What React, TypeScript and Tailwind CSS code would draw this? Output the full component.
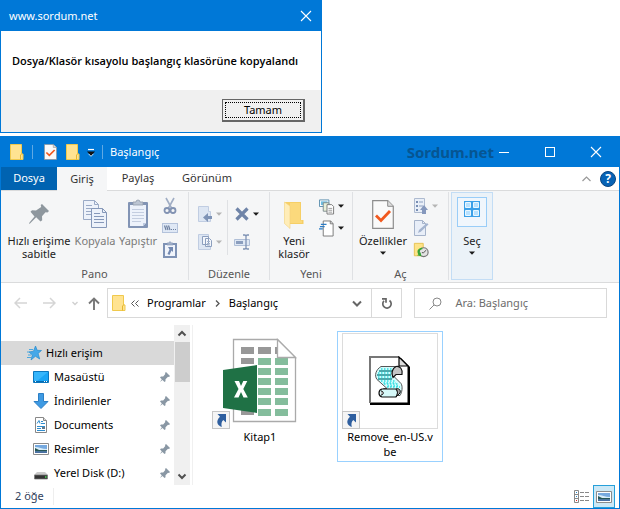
import React from 'react';

const CloseIcon = () => (
  <svg width="12" height="12" viewBox="0 0 12 12" fill="none" stroke="white" strokeWidth="1.1"><path d="M1 1l10 10M11 1L1 11" /></svg>
);

const SmallFolder = () => (
  <svg width="16" height="18" viewBox="0 0 16 18">
    <path d="M1.5 1.5h11v9.5h1.500v5.500H1.500z" fill="#ffe391" stroke="#f0c94c" />
    <path d="M11.500 16.500V12l1.500-1.500" fill="none" stroke="#e5b72f" />
  </svg>
);

const CheckSheet = ({ w = 14, h = 18 }: { w?: number; h?: number }) => (
  <svg width={w} height={h} viewBox="0 0 22 29" preserveAspectRatio="none">
    <path d="M.7.700h15l5.600 5.600v22H.700z" fill="#fafafa" stroke="#8d8d8d" strokeWidth="1.200" />
    <path d="M15.700.700v5.600h5.600" fill="#ddd" stroke="#8d8d8d" />
    <path d="M4 15.500l5 5L18 11" fill="none" stroke="#f1591f" strokeWidth="2.800" />
  </svg>
);

const Caret = ({ color = '#1a1a1a' }: { color?: string }) => (
  <svg width="6" height="4" viewBox="0 0 6 4"><path d="M0 .5h6L3 3.800z" fill={color} /></svg>
);

const BigPin = () => (
  <svg width="24" height="32" viewBox="0 0 24 32">
    <path d="M15 6l7 7-1.500 1.500-2-.3-3.500 4 .2 4-1.700 1.400-4.300-4.300L3 25.500l-1 .5.500-1.500 5-6L3.500 13.800 5 12.300l4 .2L14.200 9l-.5-2z" fill="#8e979e" />
  </svg>
);

const CopyBig = () => (
  <svg width="26" height="32" viewBox="0 0 26 32" stroke="#9aaac6">
    <path d="M1.500 2.500h11l4 4v15h-15z" fill="#edf2fa" />
    <path d="M12.500 2.500v4h4M4 7.500h6M4 10.500h9M4 13.500h9M4 16.500h9" fill="none" />
    <path d="M9.500 10.500h11l4 4v15h-15z" fill="#edf2fa" stroke="#8698b9" />
    <path d="M20.500 10.500v4h4M12 15.500h6M12 18.500h10M12 21.500h10M12 24.500h10" fill="none" stroke="#8698b9" />
  </svg>
);

const PasteBig = () => (
  <svg width="22" height="32" viewBox="0 0 22 32">
    <rect x="1" y="4" width="20" height="26" rx="1" fill="#8294b5" />
    <path d="M3 7h16v18l-3 3H3z" fill="#edf2fb" />
    <path d="M5 11.500h12M5 14.500h12M5 17.500h12M5 20.500h12M5 23.500h9" stroke="#c3cde0" />
    <path d="M6 7V4h3a2 2 0 014 0h3v3z" fill="#bcc5d3" stroke="#8f99a9" strokeWidth=".8" />
    <path d="M19 25h-3v3z" fill="#bdc9df" />
  </svg>
);

const Scissors = () => (
  <svg width="14" height="18" viewBox="0 0 14 18" fill="none" stroke="#8192b2">
    <path d="M3 1l5.500 10M11 1L5.500 11" strokeWidth="1.600" stroke="#a0adc4" />
    <circle cx="4" cy="13.500" r="2.500" strokeWidth="1.800" /><circle cx="10" cy="13.500" r="2.500" strokeWidth="1.800" />
  </svg>
);
const PathIcon = () => (
  <svg width="16" height="10" viewBox="0 0 16 10">
    <rect x=".5" y=".5" width="15" height="9" fill="#dfe8f5" stroke="#b3c2db" />
    <path d="M2.500 2.500L4 7M4.500 2.500L6 7M6.500 2.500L8 7M9 6.500h1M11 6.500h1M13 6.500h1" stroke="#6c7f9f" strokeWidth="1.200" />
  </svg>
);
const PasteLink = () => (
  <svg width="14" height="18" viewBox="0 0 14 18">
    <path d="M0 2h14v15H0z" fill="#7e92b5" /><path d="M2 4h10v11H2z" fill="#f0f4fb" /><path d="M4 4V2h1.500L7 .5 8.500 2H10v2z" fill="#a2b0c8" stroke="#7e92b5" strokeWidth=".6" />
    <path d="M5 6h5v5L8.500 9.500 6.500 14 4.500 13l2-4.500z" fill="#7288b0" />
  </svg>
);

const MoveTo = () => (
  <svg width="15" height="18" viewBox="0 0 15 18">
    <path d="M.500 1.500h10v5h2v10H.500z" fill="#dde6f3" stroke="#c0cde2" />
    <path d="M5 12.500l5-4.500v3h4v3h-4v3z" fill="#7e93b6" />
  </svg>
);
const CopyTo = () => (
  <svg width="15" height="18" viewBox="0 0 15 18">
    <path d="M.500 1.500h10v5h2v10H.500z" fill="#dde6f3" stroke="#c0cde2" />
    <path d="M4.500 3.500h6v8h-6zM7.500 5.500h4l2 2v6h-6z" fill="#f3f6fb" stroke="#8c9fbe" />
    <path d="M9 8.500h3M9 10.500h3M9 12h3" stroke="#a5b4cd" />
  </svg>
);
const DeleteX = () => (
  <svg width="16" height="16" viewBox="0 0 16 16"><path d="M2.500 2.500l11 11M13.500 2.500l-11 11" stroke="#6f84a8" strokeWidth="3.200" /></svg>
);
const Rename = () => (
  <svg width="16" height="16" viewBox="0 0 16 16">
    <path d="M.500 5.500h15v6H.500z" fill="#dfe8f4" stroke="#b0bfd7" /><path d="M2 7h7v3H2z" fill="#8b9ebe" />
    <path d="M9 1h2l1 1 1-1h2M9 15h2l1-1 1 1h2M12 2v12" fill="none" stroke="#7e92b4" strokeWidth="1.300" />
  </svg>
);
const NewFolder = () => (
  <svg width="22" height="32" viewBox="0 0 22 32">
    <path d="M2 4h16v18h2.500v4H6z" fill="#f6cf66" /><path d="M7 5h10v17.500h2V25H7z" fill="#fbd97c" />
    <path d="M1.500 4l5.500 4v22.500l-5.500-5z" fill="#ffedb8" stroke="#f3d27a" strokeWidth=".6" />
  </svg>
);
const NewItem = () => (
  <svg width="17" height="17" viewBox="0 0 17 17">
    <path d="M.500 1.500h10v7H.500z" fill="#fff" stroke="#5a8eae" /><path d="M2 3h7v4H2z" fill="#6dbde2" />
    <path d="M4.500 4.500h6v9h-6z" fill="#e8efd8" stroke="#7c8b8e" />
    <path d="M8.500 6.500h5l2 2v8h-7z" fill="#fff" stroke="#777" /><path d="M10 10.500h4M10 12.500h4M10 14.500h4" stroke="#999" />
  </svg>
);
const EasyAccess = () => (
  <svg width="17" height="17" viewBox="0 0 17 17">
    <path d="M4.500.500h8l2.500 3v13H4.500z" fill="#fff" stroke="#777" /><path d="M12 .500v3h3" fill="none" stroke="#777" />
    <path d="M2 4h6M1 6.500h5M0 9h4" stroke="#2d7cc5" strokeWidth="1.300" />
  </svg>
);
const OpenList = () => (
  <svg width="16" height="18" viewBox="0 0 16 18">
    <path d="M1.500 1.500h10v14h-10z" fill="#e9eff8" stroke="#aebbd0" /><path d="M3 4h2v2H3zM3 8h2v2H3zM3 12h2v2H3z" fill="#788eb4" />
    <path d="M6 5h4M6 9h4" stroke="#8da0c0" /><path d="M11 8l4 5h-2v4H9v-4H7z" fill="#8598bd" />
  </svg>
);
const EditSheet = () => (
  <svg width="16" height="18" viewBox="0 0 16 18">
    <path d="M1.500 1.500h8l3 3v12h-11z" fill="#e8eef8" stroke="#a5b3ca" /><path d="M9.500 1.500v3h3" fill="none" stroke="#a5b3ca" />
    <path d="M5 14l1-3 8-7 1.500 1.500-7.500 7z" fill="#a4b4cf" />
  </svg>
);
const History = () => (
  <svg width="18" height="18" viewBox="0 0 18 18">
    <path d="M1.500 1.500h10v14h-10z" fill="#fde388" stroke="#e6c04c" />
    <circle cx="12" cy="11.500" r="5" fill="#e4e4e4" stroke="#777" strokeWidth="1.300" /><path d="M12 12l3-3M12 12h-2" stroke="#444" />
    <path d="M10 6.500C5 7 4 11 6 14l-1.500 1 5 1-1-4.500-1 1C7 10 8 8.500 11 8z" fill="#35a536" />
  </svg>
);

const ShortcutArrow = () => (
  <svg className="block" width="18" height="18" viewBox="0 0 18 18">
    <rect x=".5" y=".5" width="17" height="17" fill="#f5f5f5" stroke="#c6c6c6" />
    <path d="M5.500 3H14v8.500l-2.700-2.500C9.500 10.500 9 13 9.800 16 5 14.500 3.500 10 8 5.800z" fill="#2f5f9f" />
  </svg>
);
const ExcelSheet = () => (
  <svg width="96" height="96" viewBox="-1 0 96 96">
    <path d="M20.500 6.500h44l18 18v64h-62z" fill="#fff" stroke="#aaa" strokeWidth="1.300" />
    <path fill="#989898" d="M28 14h13v7H28zM45 14h13v7H45zM62 14h3v7h-3zM28 25h13v6H28zM28 76h13v6H28z" />
    {[25, 35, 45, 55, 65, 76].map((y) => <path key={y} d={`M45 ${y}h13v7H45zM62 ${y}h13v7H62z`} fill="#84bd9c" />)}
    <path d="M64.500 6.500v18h18z" fill="#fff" stroke="#aaa" strokeWidth="1.300" />
    <path d="M10 37l34-5v48l-34-5z" fill="#1f7145" />
    <path d="M21.500 48H26l2 5 2.300-5h4l-4 8 4.500 8.500H30.500L28 59l-2.500 5.500H21l4.500-8.500z" fill="#fff" />
  </svg>
);
const ScriptSheet = () => (
  <svg width="42" height="50" viewBox="0 0 42 50">
    <path d="M3 2h29l9 9v38H1V2z" fill="#000" /><path d="M1 1h29l8.500 8.500V46.500H1z" fill="#fff" /><path d="M1 47V1h29" fill="none" stroke="#777" strokeWidth="2" />
    <path d="M30 1v9h9z" fill="#ddd" stroke="#000" strokeWidth="1.200" />
    <path d="M12 10.500h16c-4 2-6 6-4 9l8 8c2 3 1 9-1 12H16c-5-1-4-6-1-7h3l-10-9c-3-4-1-10 4-13z" fill="#d4fcfc" stroke="#555" strokeWidth="1" />
    <path d="M10 15h13M8 19h14M9 23h14" stroke="#1d8d93" strokeWidth="1.300" />
    <path d="M12 13h12M9 17h13M9 21h14M12 25h14M15 28h15M18 31h13" stroke="#30dce0" strokeWidth="1.600" strokeDasharray="1.500 1.500" />
    <path d="M13 27h14M17 30h13" stroke="#30dce0" strokeWidth="1.400" strokeDasharray="1.500 1.500" strokeDashoffset="1.500" />
    <path d="M27 10.500c4-1 7 3 6 8h-6l-3 3c-2-4-1-9 3-11z" fill="#c4c4c4" stroke="#111" strokeWidth="1.200" />
    <path d="M13 33h14c2 2 2 5 0 8H13c-4-1-4-7 0-8z" fill="#d6f8f8" stroke="#111" strokeWidth="1.200" />
    <path d="M27 33c3-1 5 1 4 4l-4 4c2-3 2-6 0-8z" fill="#aaa" stroke="#111" />
    <path d="M12 35c3 0 3 4 0 4" fill="#c4c4c4" stroke="#111" />
  </svg>
);

const Star = () => (
  <svg width="16" height="16" viewBox="0 0 16 16">
    <path d="M9.500 1l1.700 4.300 4.300.2-3.400 2.900 1.600 5.600-4.300-2.700L5 15l1.300-5L3 7l4.500-.8z" fill="#46a8e8" stroke="#258ccf" strokeWidth=".7" />
    <path d="M3 4.500h4M1 7h3M2 10h3M1 12.500h4" stroke="#4ba7de" />
  </svg>
);
const Desktop = () => (
  <svg width="16" height="16" viewBox="0 0 16 16"><path d="M.500 2.500h15v11H.500z" fill="#19a4f5" stroke="#0b76bd" /><path d="M15 3L4 12H1V3z" fill="#35b5fb" /><path d="M1 12.500h14" stroke="#056ab0" /><path d="M2 12.500h1M11 12.500h1M13 12.500h1" stroke="#fff" /></svg>
);
const Download = () => (
  <svg width="16" height="16" viewBox="0 0 16 16"><path d="M5.500.500h5v8h4.500L8 15.500 1 8.500h4.500z" fill="#3e9ae3" stroke="#2c7fc5" /></svg>
);
const Documents = () => (
  <svg width="16" height="16" viewBox="0 0 16 16">
    <path d="M2.500.500h8l3 3v12h-11z" fill="#fff" stroke="#888" /><path d="M10.500.500v3h3" fill="#ddd" stroke="#888" />
    <path d="M4 6.500l2-3 1 3M8 4.500h2M8 6.500h4M4 9.500h8M4 11.500h4M4 13.500h8" stroke="#2f8dce" fill="none" /><path d="M9 10h3v2H9z" fill="#66798a" />
  </svg>
);
const Picture = () => (
  <svg width="16" height="16" viewBox="0 0 16 16">
    <path d="M.500 2.500h15v11H.500z" fill="#fff" stroke="#8b8b8b" /><path d="M2 4h12v8H2z" fill="#76a9df" />
    <path d="M2 6c4 0 7 2 12 2v2H2z" fill="#d8edf8" /><path d="M2 7l4 2h8v1.500H2z" fill="#275655" /><path d="M2 10.500h12V12H2z" fill="#496fa3" />
  </svg>
);
const Disk = () => (
  <svg width="16" height="16" viewBox="0 0 16 16"><path d="M4 7h8l3 3H1z" fill="#c9c9c9" /><path d="M1.500 10h13v4h-13z" fill="#343434" stroke="#777" strokeWidth=".7" /><path d="M12 12h1.500" stroke="#48da54" strokeWidth="1.500" /></svg>
);
const TinyPin = () => (
  <svg width="12" height="12" viewBox="0 0 12 12"><path d="M7 1l4 4-1 1-1-.2-2.500 2.500v2L5.500 11 3.500 9 1 11l1.800-2.700L1 6.500 2 5.500h2.200L6.300 3 6 2z" fill="#8997a4" /></svg>
);

const text = 'text-[11px] leading-[13px]';

type BigProps = { icon: React.ReactNode; lines: string[]; width: string; muted?: boolean; caret?: boolean };
function BigButton({ icon, lines, width, muted, caret }: BigProps) {
  return (
    <button className={`${width} ${text} flex shrink-0 flex-col items-center pt-[6px] whitespace-nowrap ${muted ? 'text-[#7a7a7a]' : 'text-[#222]'}`}>
      <span className="mb-1 flex h-8 items-center justify-center">{icon}</span>
      {lines.map((l) => <span key={l}>{l}</span>)}
      {caret && <span className="flex h-[11px] items-center"><Caret /></span>}
    </button>
  );
}

function SmallButton({ icon, caret, label, tall }: { icon: React.ReactNode; caret?: string; label: string; tall?: boolean }) {
  return (
    <button aria-label={label} className={`flex items-center gap-[3px] ${tall ? 'h-7' : 'h-[22px]'}`}>
      <span className="flex w-4 justify-center">{icon}</span>
      {caret && <Caret color={caret} />}
    </button>
  );
}

function Group({ name, width, children }: { name: string; width: string; children: React.ReactNode }) {
  return (
    <section aria-label={name} className={`${width} flex shrink-0 flex-col border-r border-[#dfe1e4]`}>
      <div className="flex h-[74px]">{children}</div>
      <div className={`${text} pt-px text-center text-[#555]`}>{name}</div>
    </section>
  );
}

const navItems = [
  { name: 'Masaüstü', icon: <Desktop /> },
  { name: 'İndirilenler', icon: <Download /> },
  { name: 'Documents', icon: <Documents /> },
  { name: 'Resimler', icon: <Picture /> },
  { name: 'Yerel Disk (D:)', icon: <Disk /> },
];

function MessageDialog() {
  return (
    <div role="dialog" aria-label="www.sordum.net" className="w-[322px] max-w-full border border-[#0078d7] bg-white">
      <header className="flex h-[30px] items-center justify-between bg-[#0078d7] pr-[9px] pl-2 text-[11px] text-white">
        <span>www.sordum.net</span>
        <button aria-label="Kapat"><CloseIcon /></button>
      </header>
      <p className="h-[59px] pt-[22px] pl-[11px] font-['Open_Sans','Noto_Sans',sans-serif] text-[11px] leading-4 font-semibold whitespace-nowrap text-black">Dosya/Klasör kısayolu başlangıç klasörüne kopyalandı</p>
      <footer className="flex h-[42px] items-start justify-end bg-[#f0f0f0] pt-[9px] pr-4">
        <button className="h-[23px] w-[83px] border border-r-2 border-b-2 border-[#666] bg-[#f0f0f0] p-[2px] text-[11px] text-black">
          <span className="flex h-full items-center justify-center border border-dotted border-black">Tamam</span>
        </button>
      </footer>
    </div>
  );
}

function Ribbon() {
  return (
    <div className="flex h-[93px] border-y border-[#dadbdc] bg-[#f5f6f7] pt-px pb-[2px]">
      <Group name="Pano" width="w-[188px]">
        <BigButton width="ml-[5px] w-[66px]" icon={<BigPin />} lines={['Hızlı erişime', 'sabitle']} />
        <BigButton width="w-[46px]" muted icon={<CopyBig />} lines={['Kopyala']} />
        <BigButton width="w-10" muted icon={<PasteBig />} lines={['Yapıştır']} />
        <div className="ml-1 pt-[3px]">
          <SmallButton label="Kes" icon={<Scissors />} />
          <SmallButton label="Yolu kopyala" icon={<PathIcon />} />
          <SmallButton label="Kısayol yapıştır" icon={<PasteLink />} />
        </div>
      </Group>
      <Group name="Düzenle" width="w-[81px]">
        <div className="ml-2 pt-2">
          <SmallButton tall label="Taşı" icon={<MoveTo />} caret="#b5b5b5" />
          <SmallButton tall label="Şuraya kopyala" icon={<CopyTo />} caret="#b5b5b5" />
        </div>
        <div className="mt-2 ml-[5px] h-[55px] border-l border-[#dfe1e4]" />
        <div className="ml-[6px] pt-2">
          <SmallButton tall label="Sil" icon={<DeleteX />} caret="#1a1a1a" />
          <SmallButton tall label="Yeniden adlandır" icon={<Rename />} />
        </div>
      </Group>
      <Group name="Yeni" width="w-[83px]">
        <BigButton width="ml-1 w-10" icon={<NewFolder />} lines={['Yeni', 'klasör']} />
        <div className="ml-[5px] pt-[3px]">
          <SmallButton label="Yeni öğe" icon={<NewItem />} caret="#1a1a1a" />
          <SmallButton label="Kolay erişim" icon={<EasyAccess />} caret="#1a1a1a" />
        </div>
      </Group>
      <Group name="Aç" width="w-[96px]">
        <BigButton width="ml-1 w-[52px]" caret icon={<CheckSheet w={22} h={29} />} lines={['Özellikler']} />
        <div className="ml-1 pt-[3px]">
          <SmallButton label="Birlikte aç" icon={<OpenList />} caret="#b5b5b5" />
          <SmallButton label="Düzenle" icon={<EditSheet />} />
          <SmallButton label="Geçmiş" icon={<History />} />
        </div>
      </Group>
      <button className={`${text} ml-[2px] flex w-[42px] flex-col items-center border border-[#c3ddf5] bg-[#ebf2f8] pt-1 text-[#222]`}>
        <span className="mb-[7px] flex h-[30px] w-[30px] justify-center border border-[#99cdf8] bg-[#f0f6fc] pt-[3px]">
          <svg width="16" height="16" viewBox="0 0 16 16"><path d="M0 0h16v16H0z" fill="#3ba0e8" /><path d="M1.500 1.500h5v5h-5zM9.500 1.500h5v5h-5zM1.500 9.500h5v5h-5zM9.500 9.500h5v5h-5z" fill="#b7e1ff" stroke="#e9f7ff" /></svg>
        </span>
        <span>Seç</span>
        <span className="flex h-[11px] items-center"><Caret /></span>
      </button>
    </div>
  );
}

function AddressRow() {
  return (
    <div className="flex h-[42px] items-start pt-[5px] pr-3 text-[11px]">
      <nav aria-label="Gezinti" className="flex h-[30px] w-[106px] shrink-0 items-center pl-[13px]">
        <button aria-label="Geri"><svg className="block" width="13" height="12" viewBox="0 0 13 12" fill="none" stroke="#d5d5d5" strokeWidth="1.500"><path d="M13 6H1M6 1L1 6l5 5" /></svg></button>
        <button aria-label="İleri" className="ml-4"><svg className="block" width="13" height="12" viewBox="0 0 13 12" fill="none" stroke="#d5d5d5" strokeWidth="1.500"><path d="M0 6h12M7 1l5 5-5 5" /></svg></button>
        <button aria-label="Son konumlar" className="ml-4"><svg className="block" width="6" height="5" viewBox="0 0 6 5" fill="none" stroke="#d0d0d0" strokeWidth="1.400"><path d="M.500 1L3 3.500 5.500 1" /></svg></button>
        <button aria-label="Yukarı" className="ml-[10px]"><svg className="block" width="12" height="13" viewBox="0 0 12 13" fill="none" stroke="#777" strokeWidth="1.900"><path d="M6 13V1.500M1 6.500l5-5 5 5" /></svg></button>
      </nav>
      <div className="grid grow grid-cols-[296fr_193fr] gap-3">
        <div className="flex h-[30px] min-w-0 items-center border border-[#d9d9d9] pl-[3px] text-black">
          <SmallFolder />
          <svg className="ml-1" width="8" height="7" viewBox="0 0 8 7" fill="none" stroke="#555"><path d="M3.500.500l-3 3 3 3M7.500.500l-3 3 3 3" /></svg>
          <button className="ml-2">Programlar</button>
          <svg className="ml-[9px]" width="5" height="7" viewBox="0 0 5 7" fill="none" stroke="#555" strokeWidth="1.300"><path d="M1 .500l3 3-3 3" /></svg>
          <button className="ml-[9px]">Başlangıç</button>
          <button aria-label="Önceki konumlar" className="mr-[9px] ml-auto"><svg className="block" width="10" height="7" viewBox="0 0 10 7" fill="none" stroke="#666" strokeWidth="2"><path d="M1 1.500l4 4 4-4" /></svg></button>
          <button aria-label="Yenile" className="flex h-full w-[30px] items-center justify-center border-l border-[#d9d9d9]">
            <svg width="12" height="13" viewBox="0 0 12 13" fill="none" stroke="#666" strokeWidth="1.700"><path d="M8.500 3.500a4.200 4.200 0 11-5.500.4" /><path d="M1 1.800h4v4" /></svg>
          </button>
        </div>
        <label className="flex h-[30px] min-w-0 items-center border border-[#d9d9d9] pl-[14px]">
          <svg className="shrink-0" width="13" height="13" viewBox="0 0 13 13" fill="none" stroke="#888"><circle cx="8" cy="5" r="4" /><path d="M5 8L.500 12.500" /></svg>
          <input aria-label="Ara" placeholder="Ara: Başlangıç" className="ml-[13px] w-full min-w-0 bg-transparent outline-none placeholder:text-[#6d6d6d]" />
        </label>
      </div>
    </div>
  );
}

function Explorer() {
  return (
    <div className="mt-[3px] border border-[#0078d7] bg-white">
      <header className="relative flex h-[30px] items-center bg-[#0078d7] pl-2 text-[11px] text-white">
        <SmallFolder />
        <span className="ml-[7px] h-[14px] border-l border-[#5fa9e4]" />
        <button aria-label="Özellikler" className="ml-[11px]"><CheckSheet w={13} h={16} /></button>
        <button aria-label="Yeni klasör" className="ml-2"><SmallFolder /></button>
        <button aria-label="Araç çubuğunu özelleştir" className="ml-[6px]">
          <svg className="block" width="8" height="9" viewBox="0 0 8 9"><path d="M1 1.500h6" stroke="#fff" strokeWidth="1.200" /><path d="M0 3.500h8L4 8z" fill="#111" /><path d="M1.500 5.800L4 8.300l2.500-2.500" stroke="#fff" fill="none" strokeWidth=".8" /></svg>
        </button>
        <span className="ml-[7px] h-[14px] border-l border-[#5fa9e4]" />
        <h1 className="ml-[7px]">Başlangıç</h1>
        <span className="absolute right-[125px] text-[15px] font-bold text-[#065592]">Sordum.net</span>
        <div className="ml-auto flex h-full">
          <button aria-label="Simge durumuna küçült" className="flex w-[46px] items-center justify-center"><span className="w-[10px] border-t border-white" /></button>
          <button aria-label="Ekranı kapla" className="flex w-[46px] items-center justify-center"><span className="size-[10px] border border-white" /></button>
          <button aria-label="Kapat" className="flex w-[46px] items-center justify-center"><CloseIcon /></button>
        </div>
      </header>
      <div className="flex h-[23px] items-stretch text-[11px] text-[#333]">
        <button className="w-14 bg-[#0063b1] text-white">Dosya</button>
        <button className="relative z-10 -mb-px w-[50px] bg-[#f5f6f7]">Giriş</button>
        <button className="w-[62px]">Paylaş</button>
        <button className="w-[76px]">Görünüm</button>
        <div className="ml-auto flex items-center gap-[9px] pr-[3px]">
          <button aria-label="Şeridi daralt"><svg className="block" width="9" height="6" viewBox="0 0 9 6" fill="none" stroke="#999" strokeWidth="1.200"><path d="M.500 5l4-4 4 4" /></svg></button>
          <button aria-label="Yardım" className="flex size-4 items-center justify-center rounded-full border border-[#0a4580] bg-[#0863b5] text-[12px] font-bold text-white">?</button>
        </div>
      </div>
      <Ribbon />
      <AddressRow />
      <div className="flex h-[160px]">
        <nav aria-label="Klasörler" className="w-[173px] shrink-0 pt-4 text-[11px] text-black">
          <button className="flex h-6 w-full items-center gap-1 bg-[#d9d9d9] pl-[25px]"><Star /><span>Hızlı erişim</span></button>
          {navItems.map((item) => (
            <button key={item.name} className="flex h-6 w-full items-center pr-[3px] pl-8">
              {item.icon}<span className="mr-auto ml-[5px] whitespace-nowrap">{item.name}</span><TinyPin />
            </button>
          ))}
        </nav>
        <div className="flex w-4 shrink-0 flex-col items-center bg-[#f0f0f0]">
          <svg width="16" height="17" viewBox="0 0 16 17" fill="none" stroke="#505050" strokeWidth="2"><path d="M4.500 10.500L8 7l3.500 3.500" /></svg>
          <div className="h-10 w-[15px] bg-[#cdcdcd]" />
          <svg className="mt-auto" width="16" height="17" viewBox="0 0 16 17" fill="none" stroke="#505050" strokeWidth="2"><path d="M4.500 6.500L8 10l3.500-3.500" /></svg>
        </div>
        <main className="ml-[2px] flex grow items-start gap-6 border-l border-[#f0f0f0] pt-[6px] pl-[14px] text-[11px] leading-[15px] text-black">
          <button className="flex w-[106px] flex-col items-center border border-transparent px-1 pt-px pb-1">
            <span className="relative flex h-24 w-24 items-start justify-center"><ExcelSheet /><span className="absolute bottom-0 left-0"><ShortcutArrow /></span></span>
            <span>Kitap1</span>
          </button>
          <button className="flex h-[131px] w-[106px] flex-col items-center border border-[#99d1ff] px-1 pt-px">
            <span className="relative flex h-24 w-24 items-center justify-center border border-[#dcdcdc]"><ScriptSheet /><span className="absolute -bottom-px -left-px"><ShortcutArrow /></span></span>
            <span className="whitespace-nowrap">Remove_en-US.v<br />be</span>
          </button>
        </main>
      </div>
      <footer className="flex h-[23px] items-center pl-[14px] text-[11px] text-[#33425c]">
        <span className="border-r border-[#eee] pr-[9px]">2 öğe</span>
        <button aria-label="Ayrıntılar" className="mr-[2px] ml-auto">
          <svg className="block" width="18" height="14" viewBox="0 0 18 14" fill="none" stroke="#888"><path d="M1.500.500h4v12h-4zM1.500 4.500h4M1.500 8.500h4M7 2.500h4M12 2.500h4M7 6.500h4M12 6.500h4M7 10.500h4M12 10.500h4" /><path d="M3 2.500h1M3 6.500h1" stroke="#278bd0" /><path d="M3 10.500h1" stroke="#d22" /></svg>
        </button>
        <button aria-label="Büyük simgeler" className="mr-1 flex h-[23px] w-[22px] items-center justify-center border border-[#26a0da] bg-[#cce8f6]"><Picture /></button>
      </footer>
    </div>
  );
}

export default function App() {
  return (
    <div className="bg-white font-['Noto_Sans','Open_Sans',sans-serif]">
      <MessageDialog />
      <Explorer />
    </div>
  );
}
